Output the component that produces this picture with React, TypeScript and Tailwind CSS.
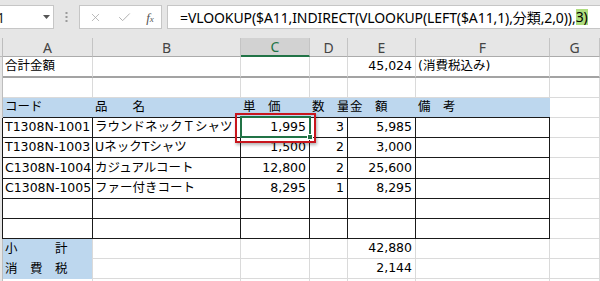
import { X, Check } from "lucide-react";

const widths = ["w-[90px]", "w-[148px]", "w-[69px]", "w-[38px]", "w-[68px]", "w-[134px]", "flex-1"];
const letters = ["A", "B", "C", "D", "E", "F", "G"];

type Row = {
  h: string;
  cells: string[];
  right?: number[];
  blue?: number[];
  dark?: boolean;
  darkBottom?: boolean;
  thickBottom?: boolean;
};

const rows: Row[] = [
  { h: "h-[21px]", cells: ["合計金額", "", "", "", "45,024", "(消費税込み)", ""], right: [4], thickBottom: true },
  { h: "h-[20px]", cells: ["", "", "", "", "", "", ""] },
  {
    h: "h-[20px]",
    cells: ["コード", "品　　名", "単　価", "数　量", "金　額", "備　考", ""],
    blue: [0, 1, 2, 3, 4, 5],
    darkBottom: true,
  },
  { h: "h-[20px]", cells: ["T1308N-1001", "ラウンドネックＴシャツ", "1,995", "3", "5,985", "", ""], right: [2, 3, 4], dark: true },
  { h: "h-[20px]", cells: ["T1308N-1003", "UネックTシャツ", "1,500", "2", "3,000", "", ""], right: [2, 3, 4], dark: true },
  { h: "h-[21px]", cells: ["C1308N-1004", "カジュアルコート", "12,800", "2", "25,600", "", ""], right: [2, 3, 4], dark: true },
  { h: "h-[20px]", cells: ["C1308N-1005", "ファー付きコート", "8,295", "1", "8,295", "", ""], right: [2, 3, 4], dark: true },
  { h: "h-[20px]", cells: ["", "", "", "", "", "", ""], dark: true },
  { h: "h-[20px]", cells: ["", "", "", "", "", "", ""], dark: true },
  { h: "h-[20px]", cells: ["小　　　計", "", "", "", "42,880", "", ""], right: [4], blue: [0] },
  { h: "h-[20px]", cells: ["消　費　税", "", "", "", "2,144", "", ""], right: [4], blue: [0] },
  { h: "h-[20px]", cells: ["", "", "", "", "", "", ""] },
];

function SheetRow({ row }: { row: Row }) {
  return (
    <div className={`flex ${row.h}`}>
      <div
        className={`w-[3px] shrink-0 bg-[#e6e6e6] border-r ${
          row.dark ? "border-[#1a1a1a]" : "border-[#bdbdbd]"
        }`}
      />
      {row.cells.map((text, i) => {
        const inTable = i < 6;
        const dark = row.dark && inTable;
        const blue = row.blue?.includes(i);
        const right = row.right?.includes(i);
        let border = "border-r border-b border-[#dadada]";
        if (dark) border = "border-r border-b border-[#1a1a1a]";
        else if (row.darkBottom && inTable) border = "border-b border-[#1a1a1a]";
        else if (row.thickBottom) border = "border-r border-b-2 border-r-[#dadada] border-b-[#a3a3a3]";
        else if (blue) border = "border-r border-[#dadada]";
        return (
          <div
            key={i}
            className={`${widths[i]} shrink-0 h-full flex items-center overflow-hidden whitespace-nowrap ${border} ${
              blue ? "bg-[#bdd7ee]" : "bg-white"
            } ${right ? "justify-end pr-[3px]" : "pl-[2px]"}`}
          >
            {text}
          </div>
        );
      })}
    </div>
  );
}

export default function App() {
  return (
    <div className="relative w-[600px] h-[281px] overflow-hidden bg-white text-black">
      {/* formula bar */}
      <div className="flex h-[38px] bg-[#e6e6e6] pt-[5px] items-start">
        <div className="relative w-[54px] h-[24px] bg-white border border-l-0 border-[#c6c6c6] flex items-center overflow-hidden">
          <span className="-ml-[3px] text-[14px] font-['Noto_Sans',sans-serif] text-[#222]">1</span>
          <svg className="absolute left-[43px] top-[9px]" width="7" height="4" viewBox="0 0 7 4">
            <path d="M0 0 L7 0 L3.5 4 Z" fill="#555" />
          </svg>
        </div>
        <div className="w-[25px] h-[24px] flex items-center justify-center">
          <svg width="3" height="10" viewBox="0 0 3 10">
            <rect x="0.5" y="0" width="2" height="2" fill="#9a9a9a" />
            <rect x="0.5" y="4" width="2" height="2" fill="#9a9a9a" />
            <rect x="0.5" y="8" width="2" height="2" fill="#9a9a9a" />
          </svg>
        </div>
        <div className="w-[83px] h-[24px] bg-white border border-[#c6c6c6] flex items-center">
          <div className="w-[28px] flex justify-center ml-[1px]">
            <X size={13} strokeWidth={1.4} color="#a6a6a6" />
          </div>
          <div className="w-[30px] flex justify-center">
            <Check size={15} strokeWidth={1.4} color="#a6a6a6" />
          </div>
          <div className="w-[22px] flex justify-center font-['Liberation_Serif',serif] italic text-[13px] text-[#555] leading-none">
            f<span className="text-[9px] mt-[4px]">x</span>
          </div>
        </div>
        <div className="flex-1 ml-[5px] h-[24px] bg-white border border-r-0 border-[#c6c6c6] flex items-center pl-[12px] whitespace-nowrap font-['Noto_Sans','Noto_Sans_CJK_JP',sans-serif] text-[14px] tracking-[-0.1px]">
          =VLOOKUP($A11,INDIRECT(VLOOKUP(LEFT($A11,1),分類,2,0)),
          <span className="bg-[#aedd7e] leading-[16px]">3)</span>
        </div>
      </div>

      {/* column headers */}
      <div className="flex h-[19px] bg-[#e6e6e6] font-['Noto_Sans',sans-serif] text-[14px] text-[#444]">
        <div className="w-[3px] shrink-0 border-r border-b border-[#bdbdbd]" />
        {letters.map((l, i) => (
          <div
            key={l}
            className={`${widths[i]} shrink-0 h-full flex items-center justify-center border-r border-[#c4c4c4] ${
              i === 2 ? "bg-[#d2d2d2] text-[#217346] border-b-2 border-b-[#217346]" : "border-b border-b-[#ababab]"
            }`}
          >
            {l}
          </div>
        ))}
      </div>

      {/* cells */}
      <div className="font-['DejaVu_Sans','Noto_Sans_CJK_JP',sans-serif] text-[12.5px]">
        {rows.map((r, i) => (
          <SheetRow key={i} row={r} />
        ))}
      </div>

      {/* active cell */}
      <div className="absolute left-[240px] top-[116px] w-[71px] h-[22px] border-2 border-[#217346]" />
      <div className="absolute left-[307px] top-[134px] w-[6px] h-[6px] bg-[#217346] border border-white" />
      {/* red callout */}
      <div className="absolute left-[235px] top-[113px] w-[81px] h-[30px] border-2 border-[#c8161d] shadow-[1px_2px_3px_rgba(0,0,0,0.3)]" />
    </div>
  );
}
